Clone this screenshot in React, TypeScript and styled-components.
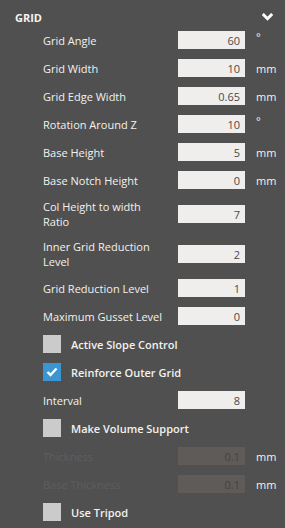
import React from "react";
import styled, { createGlobalStyle } from "styled-components";

const Global = createGlobalStyle`
  html, body { margin: 0; padding: 0; background: #505050; }
  body { font-family: "Open Sans", "Noto Sans", sans-serif; }
  * { box-sizing: border-box; }
`;

const Panel = styled.div`
  width: 285px;
  height: 528px;
  background: #505050;
  padding-top: 8px;
  overflow: hidden;
`;

const Header = styled.div`
  display: flex;
  align-items: center;
  justify-content: space-between;
  height: 18px;
  padding: 0 12px 0 15px;
  margin-bottom: 5px;
`;

const Title = styled.span`
  color: #f4f4f0;
  font-weight: 700;
  font-size: 11px;
`;

const List = styled.div`
  display: flex;
  flex-direction: column;
  gap: 10px;
  padding-left: 43px;
`;

const Row = styled.div`
  display: grid;
  grid-template-columns: 135px 67px auto;
  align-items: center;
  min-height: 18px;
`;

const Label = styled.span<{ $disabled?: boolean }>`
  font-size: 11px;
  line-height: 15px;
  color: ${(p) => (p.$disabled ? "#5e5e5e" : "#f2f2ee")};
  margin-right: 12px;
  grid-column: 1;
`;

const Field = styled.input<{ $disabled?: boolean }>`
  grid-column: 2;
  width: 67px;
  height: 18px;
  border: none;
  outline: none;
  margin: 0;
  padding: 0 5px 0 0;
  text-align: right;
  font-family: "Open Sans", "Noto Sans", sans-serif;
  font-size: 11px;
  background: ${(p) => (p.$disabled ? "#5e5b58" : "#efeeec")};
  color: ${(p) => (p.$disabled ? "#434343" : "#4a4a4a")};
`;

const Unit = styled.span<{ $deg?: boolean }>`
  grid-column: 3;
  margin-left: 11px;
  font-size: 11px;
  color: #f2f2ee;
  align-self: ${(p) => (p.$deg ? "start" : "center")};
  line-height: ${(p) => (p.$deg ? "12px" : "15px")};
`;

const CheckRow = styled.div`
  display: flex;
  align-items: center;
  gap: 10px;
  height: 18px;
`;

const Box = styled.span<{ $checked?: boolean }>`
  width: 18px;
  height: 18px;
  background: ${(p) => (p.$checked ? "#3b95d0" : "#cbcbcb")};
  display: flex;
  align-items: center;
  justify-content: center;
`;

const CheckLabel = styled.span`
  font-size: 11px;
  font-weight: 600;
  color: #f2f2ee;
`;

type FieldDef = { label: string; value: string; unit?: string; disabled?: boolean };

const Chevron = () => (
  <svg width="11" height="9" viewBox="0 0 11 9">
    <polyline points="1.8,2 5.5,5.7 9.2,2" fill="none" stroke="#ffffff" strokeWidth="3" strokeLinecap="square" />
  </svg>
);

const Check = () => (
  <svg width="12" height="10" viewBox="0 0 12 10">
    <polyline points="1.5,5 4.5,8 10.5,1.5" fill="none" stroke="#ffffff" strokeWidth="2.4" />
  </svg>
);

const FieldRow = ({ label, value, unit, disabled }: FieldDef) => (
  <Row>
    <Label $disabled={disabled}>{label}</Label>
    <Field $disabled={disabled} value={value} readOnly />
    {unit ? <Unit $deg={unit === "°"}>{unit}</Unit> : null}
  </Row>
);

const Checkbox = ({ label, checked }: { label: string; checked?: boolean }) => (
  <CheckRow>
    <Box $checked={checked}>{checked ? <Check /> : null}</Box>
    <CheckLabel>{label}</CheckLabel>
  </CheckRow>
);

export default function App() {
  return (
    <>
      <Global />
      <Panel>
        <Header>
          <Title>GRID</Title>
          <Chevron />
        </Header>
        <List>
          <FieldRow label="Grid Angle" value="60" unit="°" />
          <FieldRow label="Grid Width" value="10" unit="mm" />
          <FieldRow label="Grid Edge Width" value="0.65" unit="mm" />
          <FieldRow label="Rotation Around Z" value="10" unit="°" />
          <FieldRow label="Base Height" value="5" unit="mm" />
          <FieldRow label="Base Notch Height" value="0" unit="mm" />
          <FieldRow label="Col Height to width Ratio" value="7" />
          <FieldRow label="Inner Grid Reduction Level" value="2" />
          <FieldRow label="Grid Reduction Level" value="1" />
          <FieldRow label="Maximum Gusset Level" value="0" />
          <Checkbox label="Active Slope Control" />
          <Checkbox label="Reinforce Outer Grid" checked />
          <FieldRow label="Interval" value="8" />
          <Checkbox label="Make Volume Support" />
          <FieldRow label="Thickness" value="0.1" unit="mm" disabled />
          <FieldRow label="Base Thickness" value="0.1" unit="mm" disabled />
          <Checkbox label="Use Tripod" />
        </List>
      </Panel>
    </>
  );
}
